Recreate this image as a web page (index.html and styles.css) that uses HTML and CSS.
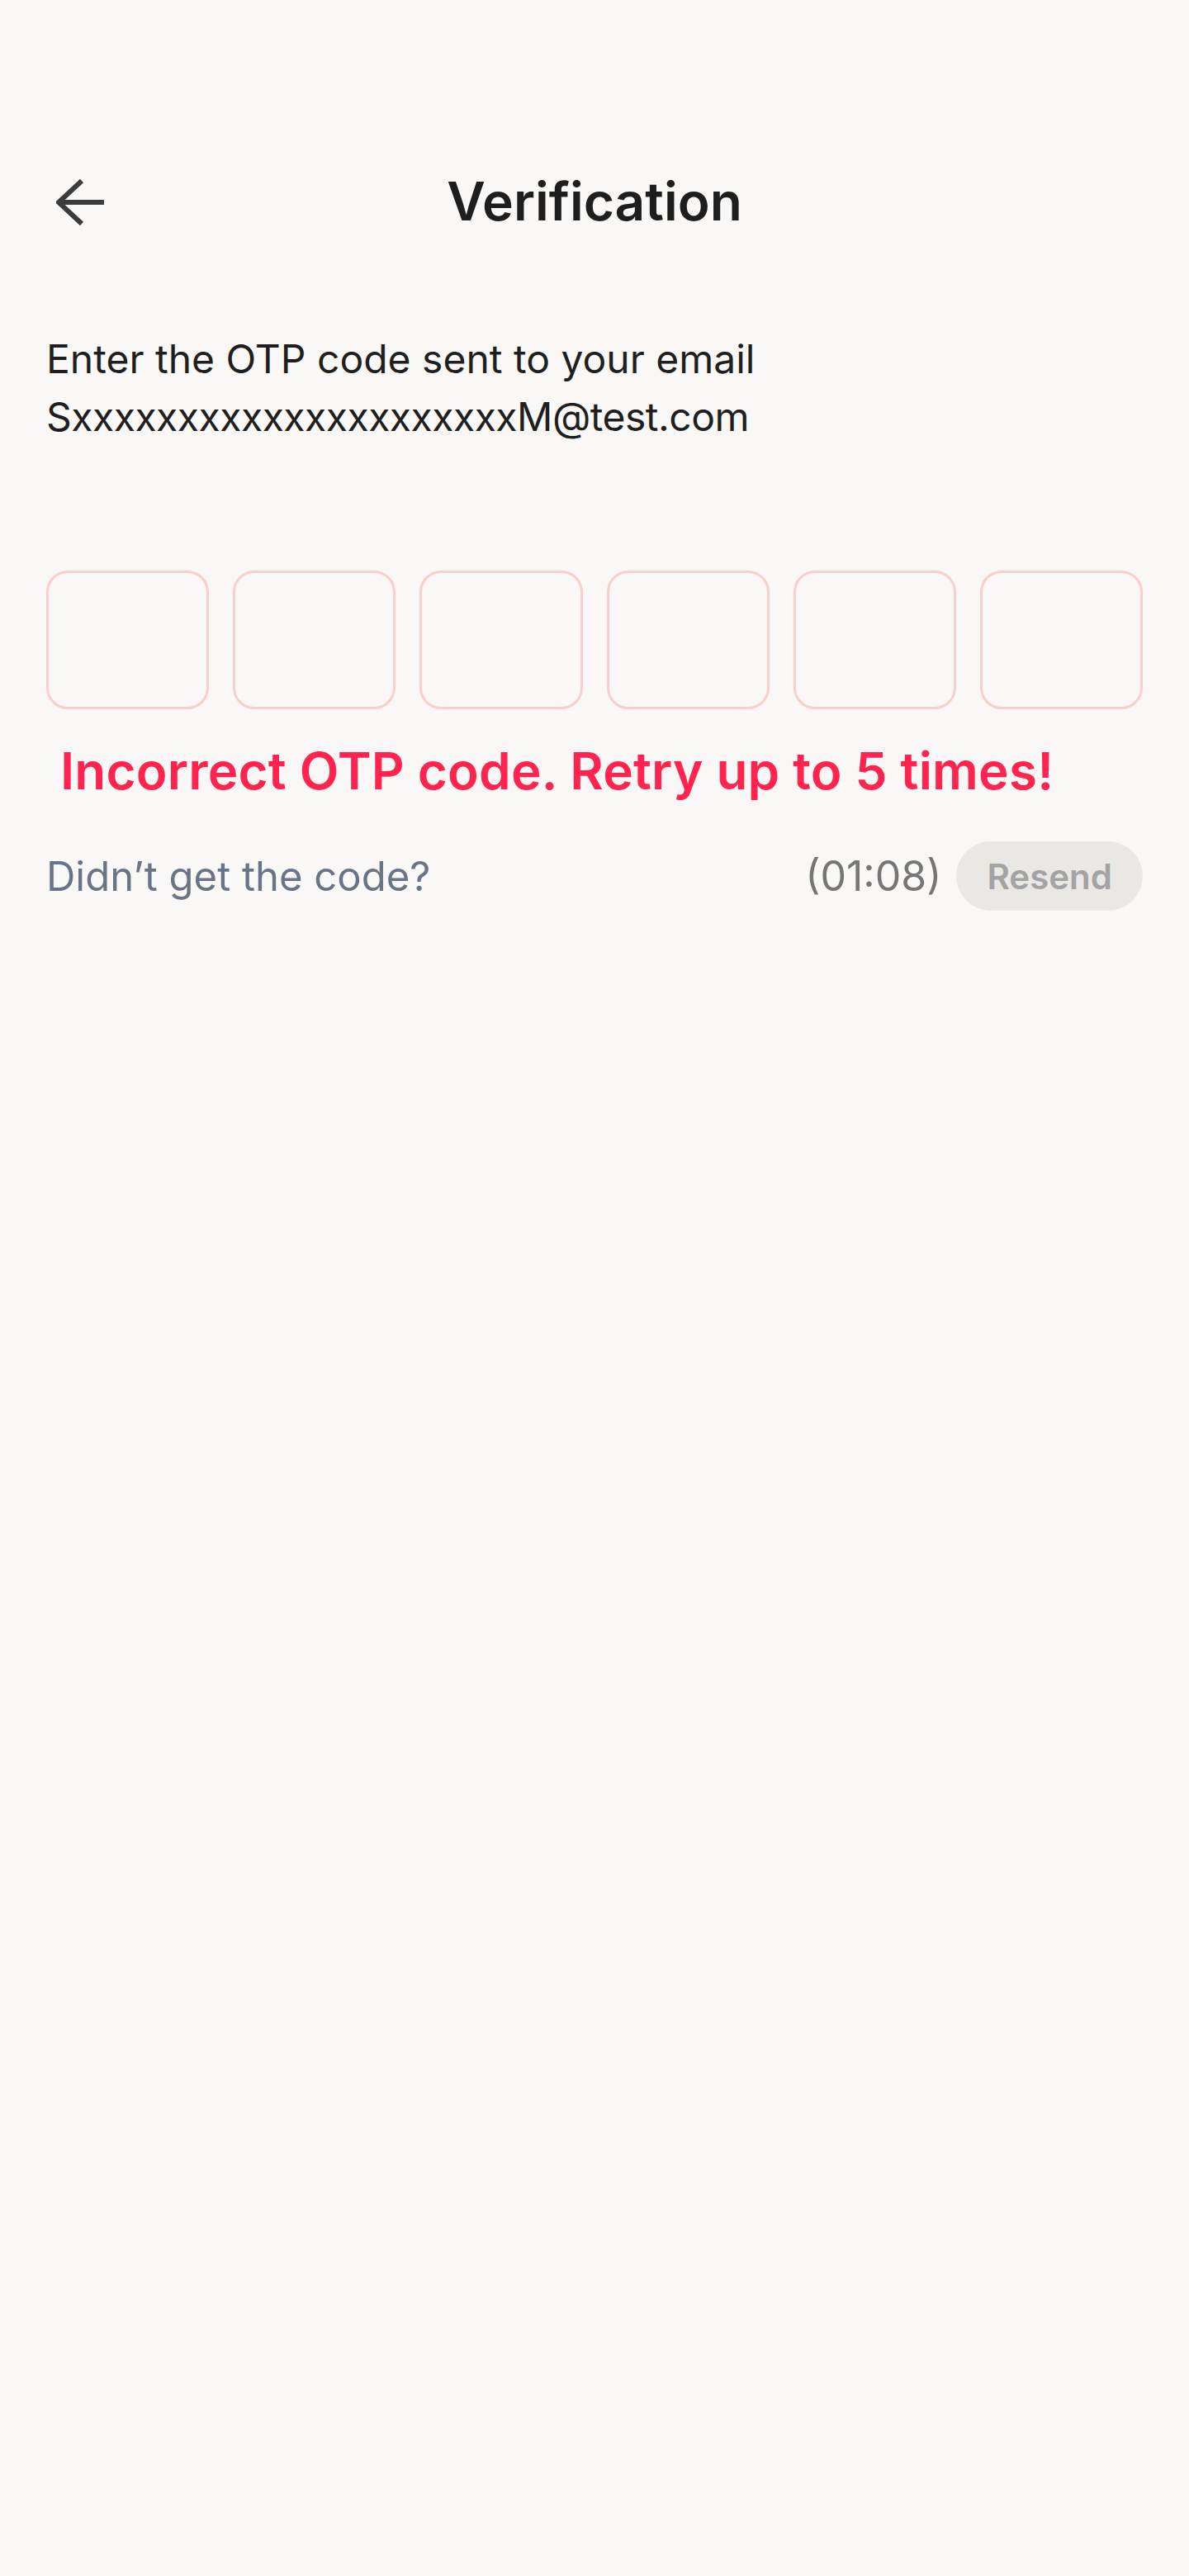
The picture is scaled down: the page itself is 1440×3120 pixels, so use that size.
FILE: index.html
```html
<!DOCTYPE html>
<html lang="en">
<head>
<meta charset="utf-8">
<title>Verification</title>
<link rel="stylesheet" href="styles.css">
</head>
<body>
<main class="screen">
  <header class="topbar">
    <button class="back" aria-label="Back">
      <svg width="60" height="60" viewBox="0 0 60 60" fill="none" stroke="#3c3c3c" stroke-width="6">
        <polyline points="31,5 3,31 31,57" stroke-linejoin="miter"/>
        <line x1="5" y1="31" x2="58" y2="31"/>
      </svg>
    </button>
    <h1 class="title">Verification</h1>
    <span class="spacer"></span>
  </header>

  <p class="intro">Enter the OTP code sent to your email<br><span class="email">SxxxxxxxxxxxxxxxxxxxxxM@test.com</span></p>

  <div class="otp">
    <div class="cell"></div>
    <div class="cell"></div>
    <div class="cell"></div>
    <div class="cell"></div>
    <div class="cell"></div>
    <div class="cell"></div>
  </div>

  <p class="error">Incorrect OTP code. Retry up to 5 times!</p>

  <div class="resend-row">
    <span class="hint">Didn’t get the code?</span>
    <div class="resend-right">
      <span class="timer">(01:08)</span>
      <button class="resend" disabled>Resend</button>
    </div>
  </div>
</main>
</body>
</html>
```

FILE: styles.css
```css
html, body {
  margin: 0;
  padding: 0;
  background: #f9f8f6;
}

body {
  font-family: Inter, "Noto Sans", sans-serif;
  min-height: 3120px;
}

.screen {
  padding: 196px 56px 0;
}

.topbar {
  display: flex;
  align-items: center;
  justify-content: space-between;
  height: 96px;
}

.back {
  width: 60px;
  height: 60px;
  margin-left: 12px;
  padding: 0;
  border: 0;
  background: none;
  display: flex;
}

.spacer {
  width: 72px;
}

.title {
  margin: 0;
  font-size: 64px;
  line-height: 96px;
  font-weight: 600;
  color: #1e1e1e;
  letter-spacing: 0;
}

.intro {
  margin: 108px 0 0;
  font-size: 48px;
  line-height: 70px;
  font-weight: 400;
  color: #1f1f1f;
  letter-spacing: 0;
}

.email {
  letter-spacing: -0.5px;
}

.otp {
  display: flex;
  gap: 29px;
  margin-top: 151px;
}

.cell {
  flex: 1;
  height: 162px;
  border: 3px solid #f8cfca;
  border-radius: 26px;
}

.error {
  margin: 35px 0 0;
  padding-left: 17px;
  font-size: 62px;
  line-height: 80px;
  font-weight: 600;
  color: #ff2450;
  letter-spacing: 0.2px;
}

.resend-row {
  display: flex;
  align-items: center;
  justify-content: space-between;
  margin-top: 45px;
  height: 84px;
}

.hint {
  font-size: 49px;
  color: #6a7486;
  letter-spacing: 0;
}

.resend-right {
  display: flex;
  align-items: center;
  gap: 18px;
}

.timer {
  font-size: 50px;
  color: #767676;
  letter-spacing: 0;
}

.resend {
  height: 84px;
  padding: 0 37px;
  border: 0;
  border-radius: 42px;
  background: #e9e8e5;
  color: #a3a3a3;
  font-family: Inter, "Noto Sans", sans-serif;
  font-size: 42px;
  font-weight: 600;
}
```
